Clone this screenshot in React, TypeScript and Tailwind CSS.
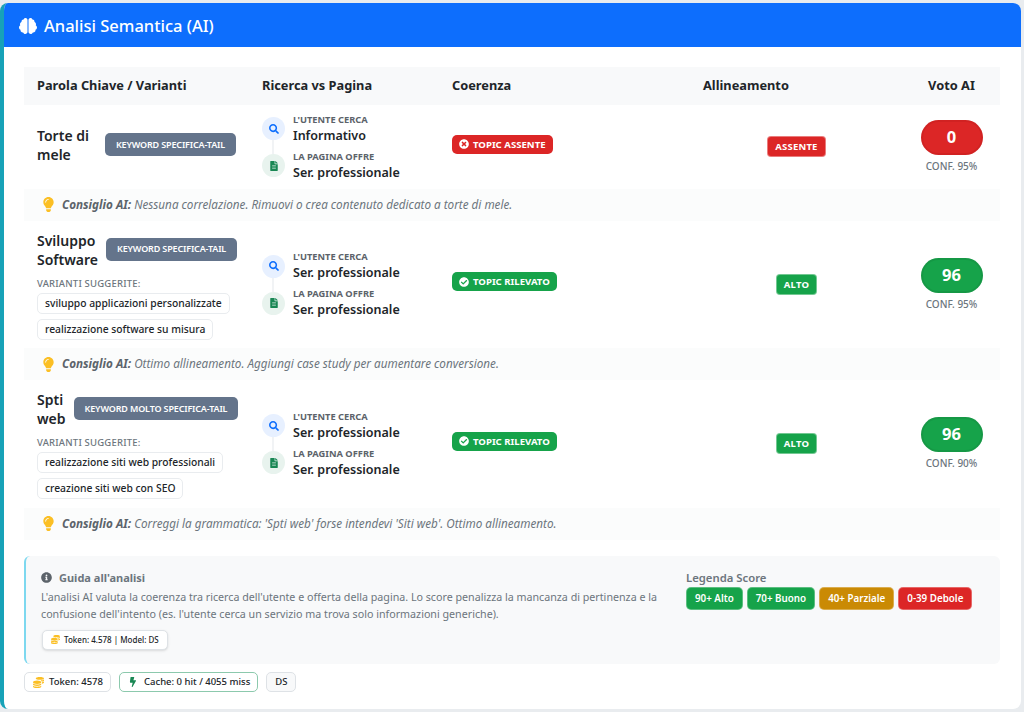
import { ReactNode } from "react";
import {
  FaBolt,
  FaBrain,
  FaCheckCircle,
  FaCoins,
  FaFileAlt,
  FaInfoCircle,
  FaLightbulb,
  FaSearch,
  FaTimesCircle,
} from "react-icons/fa";

type Row = {
  title: string;
  tag: string;
  variants: string[];
  search: string;
  ok: boolean;
  align: string;
  score: number;
  conf: string;
  tip: string;
};

const rows: Row[] = [
  {
    title: "Torte di mele",
    tag: "KEYWORD SPECIFICA-TAIL",
    variants: [],
    search: "Informativo",
    ok: false,
    align: "ASSENTE",
    score: 0,
    conf: "CONF. 95%",
    tip: "Nessuna correlazione. Rimuovi o crea contenuto dedicato a torte di mele.",
  },
  {
    title: "Sviluppo Software",
    tag: "KEYWORD SPECIFICA-TAIL",
    variants: ["sviluppo applicazioni personalizzate", "realizzazione software su misura"],
    search: "Ser. professionale",
    ok: true,
    align: "ALTO",
    score: 96,
    conf: "CONF. 95%",
    tip: "Ottimo allineamento. Aggiungi case study per aumentare conversione.",
  },
  {
    title: "Spti web",
    tag: "KEYWORD MOLTO SPECIFICA-TAIL",
    variants: ["realizzazione siti web professionali", "creazione siti web con SEO"],
    search: "Ser. professionale",
    ok: true,
    align: "ALTO",
    score: 96,
    conf: "CONF. 90%",
    tip: "Correggi la grammatica: 'Spti web' forse intendevi 'Siti web'. Ottimo allineamento.",
  },
];

const cols = "grid grid-cols-[225px_190px_251px_213px_97px]";

const IntentLine = ({ icon, label, value }: { icon: ReactNode; label: string; value: string }) => (
  <div className="flex items-center gap-[8px]">
    {icon}
    <div>
      <div className="text-[9.3px] leading-[14px] font-bold text-[#5c636a] uppercase">{label}</div>
      <div className="text-[12.5px] leading-[18px] font-semibold text-[#212529]">{value}</div>
    </div>
  </div>
);

const Legend = ({ color, children }: { color: string; children: ReactNode }) => (
  <span className={`${color} rounded-[5px] border border-white/30 px-2 py-[3px] text-[9.8px] leading-[15px] font-semibold text-white`}>
    {children}
  </span>
);

const KeywordRow = ({ row }: { row: Row }) => (
  <>
    <div className={`${cols} items-center`}>
      <div className={`px-[13px] ${row.variants.length > 0 ? "pt-[10px] pb-[8.5px]" : "pt-[9px] pb-[12px]"}`}>
        <div className="flex items-center justify-between gap-2">
          <div className="text-[14px] leading-[19px] font-semibold text-[#212529]">{row.title}</div>
          <span className="mb-[1px] shrink-0 rounded-[5px] bg-[#64748b] px-[11px] py-[5.5px] text-[9px] leading-[12px] font-semibold tracking-[-0.15px] whitespace-nowrap text-white">
            {row.tag}
          </span>
        </div>
        {row.variants.length > 0 && (
          <div className="mt-[8px]">
            <div className="text-[9.5px] leading-[14px] font-medium tracking-[0.2px] text-[#6c757d]">VARIANTI SUGGERITE:</div>
            <div className="mt-[2px] flex flex-col items-start gap-[5px]">
              {row.variants.map((v) => (
                <span key={v} className="rounded-[5px] border border-[#e9ecef] bg-white px-[7px] py-[2px] text-[10.3px] leading-[15px] font-medium text-[#212529]">
                  {v}
                </span>
              ))}
            </div>
          </div>
        )}
      </div>
      <div className="relative px-[13px] pt-[7.5px] pb-[7px]">
        <div className="absolute top-[35px] left-[23px] h-[14px] w-[2px] bg-[#f1f3f5]" />
        <div className="flex flex-col gap-[5px]">
          <IntentLine
            icon={
              <span className="relative flex h-[23px] w-[23px] items-center justify-center rounded-full bg-[#e7f0ff]">
                <FaSearch className="text-[10px] text-[#0d6efd]" />
              </span>
            }
            label="L'utente cerca"
            value={row.search}
          />
          <IntentLine
            icon={
              <span className="relative flex h-[23px] w-[23px] items-center justify-center rounded-full bg-[#e8f3ee]">
                <FaFileAlt className="text-[10px] text-[#198754]" />
              </span>
            }
            label="La pagina offre"
            value="Ser. professionale"
          />
        </div>
      </div>
      <div className="px-[13px] pb-[7px]">
        <span className={`inline-flex items-center gap-[4px] rounded-[5px] px-[7px] py-[3px] text-[9.6px] leading-[13px] font-bold text-white ${row.ok ? "bg-[#16a34a]" : "bg-[#dc2626]"}`}>
          {row.ok ? <FaCheckCircle className="text-[10px]" /> : <FaTimesCircle className="text-[10px]" />}
          {row.ok ? "TOPIC RILEVATO" : "TOPIC ASSENTE"}
        </span>
      </div>
      <div className="flex justify-center">
        <span className={`rounded-[4px] border border-white/40 px-[7px] py-[3px] text-[9.5px] leading-[13px] font-bold tracking-[0.2px] text-white ${row.ok ? "bg-[#16a34a]" : "bg-[#dc2626]"}`}>
          {row.align}
        </span>
      </div>
      <div className="flex flex-col items-center">
        <div className={`flex h-[35px] w-[62px] items-center justify-center rounded-full border-2 text-[16.5px] font-bold text-white ${row.ok ? "border-[#15803d]/30 bg-[#16a34a]" : "border-[#b91c1c]/30 bg-[#dc2626]"}`}>
          {row.score}
        </div>
        <div className="mt-[4px] text-[10px] leading-[14px] font-medium text-[#6c757d]">{row.conf}</div>
      </div>
    </div>
    <div className="flex h-[32px] items-center gap-[6px] bg-[#fbfcfc] pl-[17px] text-[11.7px] text-[#6c757d] italic">
      <FaLightbulb className="text-[15px] text-[#fbbf24]" />
      <span>
        <b className="font-bold text-[#5c636a]">Consiglio AI:</b> {row.tip}
      </span>
    </div>
  </>
);

export default function App() {
  return (
    <div className="h-[712px] overflow-hidden bg-[#e9ecef] pt-[3px] pr-[3px] pb-[3px] font-['Noto_Sans',sans-serif]">
      <div className="h-[706px] overflow-hidden rounded-[8px] border-l-4 border-[#17a2b8] bg-white">
        <div className="flex h-[44px] items-center gap-[7px] bg-[#0d6efd] pt-[2px] pl-[15px] text-white">
          <FaBrain className="text-[18px]" />
          <h1 className="text-[16.5px] font-medium">Analisi Semantica (AI)</h1>
        </div>

        <div className="pt-[20px] pr-[21px] pl-[20px]">
          <div className={`${cols} h-[38px] items-center bg-[#f8f9fa] text-[12.8px] font-bold text-[#212529]`}>
            <div className="pl-[13px]">Parola Chiave / Varianti</div>
            <div className="pl-[13px]">Ricerca vs Pagina</div>
            <div className="pl-[13px]">Coerenza</div>
            <div className="pl-[13px]">Allineamento</div>
            <div className="text-center">Voto AI</div>
          </div>

          {rows.map((row) => (
            <KeywordRow key={row.title} row={row} />
          ))}

          <div className="mt-[16px] flex h-[108.5px] gap-[16px] rounded-[6px] border-l-2 border-[#7dd8ef] bg-[#f8f9fa] pt-[14px] pl-[15px]">
            <div className="w-[629px]">
              <div className="flex items-center gap-[7px] text-[11px] leading-[16px] font-bold text-[#6c757d]">
                <FaInfoCircle className="text-[11px] text-[#5c636a]" />
                Guida all'analisi
              </div>
              <p className="mt-[3px] text-[10.7px] leading-[17px] text-[#6c757d]">
                L'analisi AI valuta la coerenza tra ricerca dell'utente e offerta della pagina. Lo score penalizza la mancanza di pertinenza e la confusione dell'intento (es. l'utente cerca un servizio ma trova solo informazioni generiche).
              </p>
              <span className="mt-[7px] ml-[1px] inline-flex h-[20px] items-center gap-[4px] rounded-[5px] border border-[#dee2e6] bg-white px-[8px] text-[8px] font-medium text-[#212529] shadow-sm">
                <FaCoins className="text-[9px] text-[#fbbf24]" />
                Token: 4.578 | Model: DS
              </span>
            </div>
            <div>
              <div className="text-[11.3px] leading-[16px] font-semibold text-[#6c757d]">Legenda Score</div>
              <div className="mt-[1px] flex gap-[4px]">
                <Legend color="bg-[#16a34a]">90+ Alto</Legend>
                <Legend color="bg-[#16a34a]">70+ Buono</Legend>
                <Legend color="bg-[#ca8a04]">40+ Parziale</Legend>
                <Legend color="bg-[#dc2626]">0-39 Debole</Legend>
              </div>
            </div>
          </div>

          <div className="mt-[8px] flex gap-[8px] text-[9.5px] font-medium text-[#212529]">
            <span className="flex h-[20px] items-center gap-[5px] rounded-[5px] border border-[#dee2e6] bg-white pr-[7px] pl-[8px]">
              <FaCoins className="text-[11px] text-[#fbbf24]" />
              Token: 4578
            </span>
            <span className="flex h-[20px] items-center gap-[6px] rounded-[5px] border border-[#8cc9ad] bg-white pr-[7px] pl-[8px]">
              <FaBolt className="text-[10px] text-[#198754]" />
              Cache: 0 hit / 4055 miss
            </span>
            <span className="flex h-[20px] items-center rounded-[5px] border border-[#dee2e6] bg-[#f8f9fa] px-[8px]">DS</span>
          </div>
        </div>
      </div>
    </div>
  );
}
